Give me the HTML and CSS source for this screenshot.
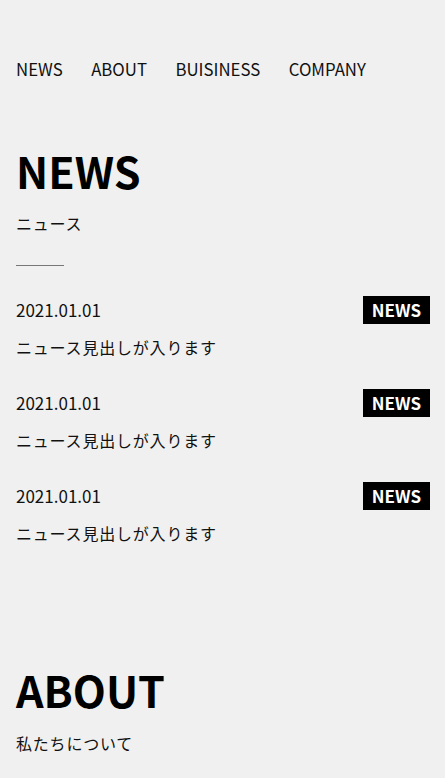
FILE: index.html
```html
<!DOCTYPE html>
<html lang="ja">
<head>
<meta charset="utf-8">
<title>NEWS</title>
<link rel="stylesheet" href="styles.css">
</head>
<body>
<header class="header">
  <nav class="nav">
    <a class="nav-link" href="#">NEWS</a>
    <a class="nav-link" href="#">ABOUT</a>
    <a class="nav-link" href="#">BUISINESS</a>
    <a class="nav-link" href="#">COMPANY</a>
  </nav>
</header>
<main>
  <section class="section news">
    <h2 class="section-title">NEWS</h2>
    <p class="section-sub">ニュース</p>
    <div class="rule"></div>
    <ul class="news-list">
      <li class="news-item">
        <div class="news-row"><span class="news-date">2021.01.01</span><span class="badge">NEWS</span></div>
        <p class="news-title">ニュース見出しが入ります</p>
      </li>
      <li class="news-item">
        <div class="news-row"><span class="news-date">2021.01.01</span><span class="badge">NEWS</span></div>
        <p class="news-title">ニュース見出しが入ります</p>
      </li>
      <li class="news-item">
        <div class="news-row"><span class="news-date">2021.01.01</span><span class="badge">NEWS</span></div>
        <p class="news-title">ニュース見出しが入ります</p>
      </li>
    </ul>
  </section>
  <section class="section about">
    <h2 class="section-title">ABOUT</h2>
    <p class="section-sub">私たちについて</p>
  </section>
</main>
</body>
</html>
```
FILE: styles.css
```css
* { box-sizing: border-box; }
html, body { margin: 0; padding: 0; }
body {
  background: #f0f0f0;
  color: #111;
  font-family: "Noto Sans CJK JP", "Noto Sans", sans-serif;
  overflow: hidden;
}
.header { padding: 56px 15px 0 16px; }
.nav { display: flex; gap: 28.5px; }
.nav-link {
  color: #111;
  text-decoration: none;
  font-size: 16.8px;
  line-height: 27px;
}
.section { padding: 0 15px 0 16px; }
.news { margin-top: 58px; }
.section-title {
  margin: 0;
  font-size: 43px;
  line-height: 58px;
  font-weight: 700;
  color: #000;
}
.section-sub {
  margin: 12px 0 0;
  font-size: 16px;
  line-height: 24px;
  letter-spacing: 0.05em;
}
.rule {
  margin-top: 30px;
  width: 48px;
  height: 1px;
  background: #777;
}
.news-list { list-style: none; margin: 30px 0 0; padding: 0; display: flex; flex-direction: column; gap: 30px; }
.news-row { display: flex; justify-content: space-between; align-items: center; height: 28px; }
.news-date { font-size: 17px; line-height: 24px; }
.badge {
  background: #000;
  color: #fff;
  font-weight: 700;
  font-size: 17px;
  line-height: 28px;
  padding: 0 9px;
}
.news-title {
  margin: 11px 0 0;
  font-size: 16px;
  line-height: 24px;
  letter-spacing: 0.05em;
}
.about { margin-top: 115px; }
.about .section-sub { margin-top: 13px; }
```
